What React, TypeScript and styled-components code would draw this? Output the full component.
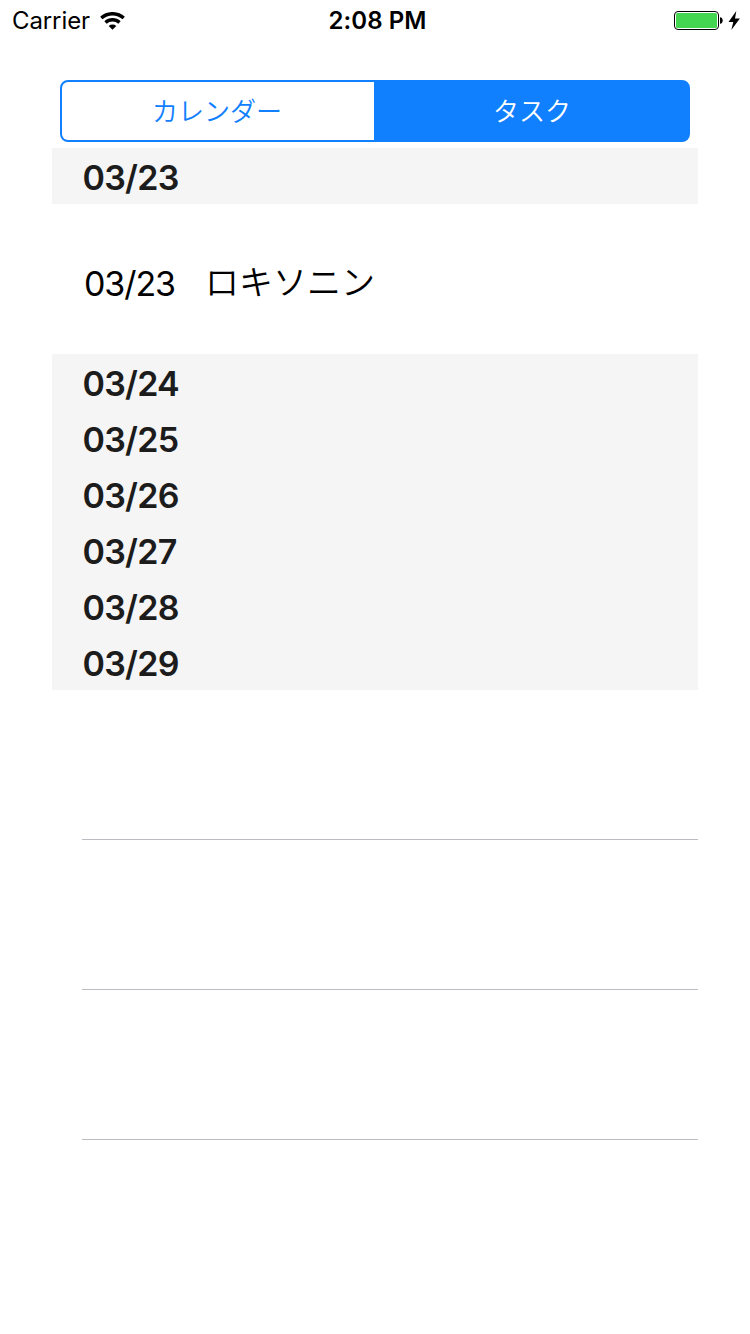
import React from 'react';
import styled, { createGlobalStyle } from 'styled-components';

const Global = createGlobalStyle`
  * { box-sizing: border-box; }
  body { margin: 0; background: #fff; font-family: Inter, "Noto Sans CJK JP", sans-serif; color: #000; }
`;
const Screen = styled.div`
  width: 750px;
  height: 1334px;
  display: flex;
  flex-direction: column;
  background: #fff;
  overflow: hidden;
`;
const StatusBar = styled.header`
  height: 40px;
  display: grid;
  grid-template-columns: 1fr auto 1fr;
  align-items: center;
  padding: 1px 10px 0 12px;
`;
const Carrier = styled.div`
  display: flex;
  align-items: center;
  gap: 10px;
  font-size: 24px;
  line-height: 40px;
  letter-spacing: -0.1px;
`;
const Clock = styled.div`
  font-size: 24px;
  font-weight: 600;
  letter-spacing: 0.1px;
  line-height: 40px;
  padding-left: 3px;
`;
const Power = styled.div`
  display: flex;
  justify-content: flex-end;
  align-items: center;
`;
const Segments = styled.nav`
  display: flex;
  height: 62px;
  margin: 40px 60px 0;
  border: 2px solid #1080ff;
  border-radius: 8px;
  background: #1080ff;
`;
const Segment = styled.button<{ $active?: boolean }>`
  flex: ${p => (p.$active ? '1' : '0 0 312px')};
  border: 0;
  border-radius: ${p => (p.$active ? '0 6px 6px 0' : '6px 0 0 6px')};
  padding: ${p => (p.$active ? '0 0 4px 2px' : '0 2px 4px 0')};
  font-family: "Noto Sans CJK JP", sans-serif;
  font-size: 26px;
  font-weight: 350;
  color: ${p => (p.$active ? '#fff' : '#1080ff')};
  background: ${p => (p.$active ? '#1080ff' : '#fff')};
`;
const List = styled.main`
  margin: 6px 52px 0;
`;
const SectionHeader = styled.h2`
  margin: 0;
  height: 56px;
  padding: 2px 0 0 30.5px;
  line-height: 56px;
  font-size: 34px;
  font-weight: 600;
  letter-spacing: -0.75px;
  color: #1c1c1c;
  background: #f5f5f5;
`;
const Task = styled.div`
  height: 150px;
  display: flex;
  align-items: center;
  gap: 30px;
  padding: 8px 0 0 32px;
  font-size: 34px;
`;
const TaskDate = styled.span`
  letter-spacing: -1.1px;
`;
const Name = styled.span`
  font-family: "Noto Sans CJK JP", sans-serif;
  font-weight: 350;
  padding-bottom: 5px;
`;
const EmptyRow = styled.div`
  height: 150px;
  margin-left: 30px;
  border-bottom: 1px solid #bcbbc1;
`;

const days = ['03/24', '03/25', '03/26', '03/27', '03/28', '03/29'];

export default function App() {
  return (
    <Screen>
      <Global />
      <StatusBar>
        <Carrier>
          <span>Carrier</span>
          <svg width="25" height="19" viewBox="0 0 25 19">
            <g fill="none" stroke="#000" strokeWidth="3.4">
              <path d="M1.3 6.1A16.4 16.4 0 0 1 23.7 6.1" />
              <path d="M5.5 10.500A10.2 10.2 0 0 1 19.5 10.500" />
            </g>
            <path d="M12.500 17.800L8.700 14A5.600 5.600 0 0 1 16.300 14Z" />
          </svg>
        </Carrier>
        <Clock>2:08 PM</Clock>
        <Power>
          <svg width="66" height="20" viewBox="0 0 66 20">
            <rect x="0.5" y="0.5" width="44" height="18" rx="3.5" fill="#fff" stroke="#000" />
            <rect x="2" y="2" width="41" height="15" rx="1.5" fill="#44d650" />
            <path d="M46 6.2c3.600 0 3.600 6.600 0 6.600Z" />
            <path d="M62.300 0L54.500 11H59.300L57.300 19L65.900 7.500H61Z" />
          </svg>
        </Power>
      </StatusBar>
      <Segments>
        <Segment>カレンダー</Segment>
        <Segment $active>タスク</Segment>
      </Segments>
      <List>
        <SectionHeader>03/23</SectionHeader>
        <Task>
          <TaskDate>03/23</TaskDate>
          <Name>ロキソニン</Name>
        </Task>
        {days.map(d => <SectionHeader key={d}>{d}</SectionHeader>)}
        <EmptyRow />
        <EmptyRow />
        <EmptyRow />
      </List>
    </Screen>
  );
}
